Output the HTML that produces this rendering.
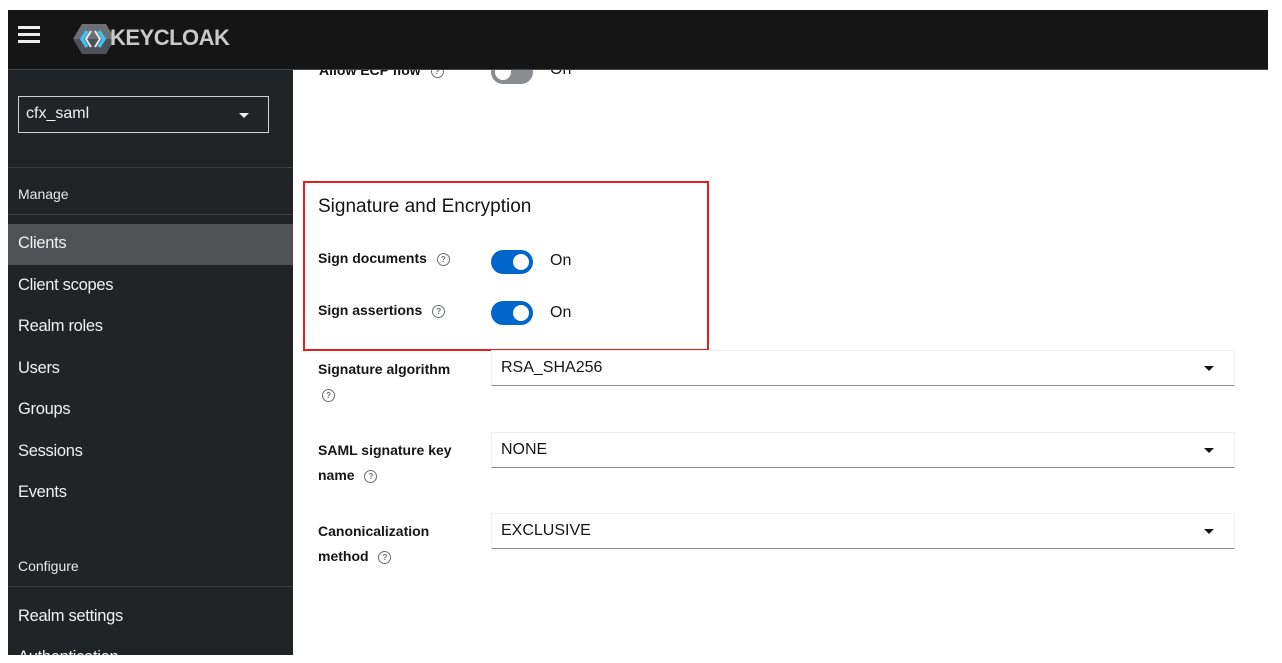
<!DOCTYPE html>
<html><head><style>
*{box-sizing:border-box;margin:0;padding:0}
body{width:1282px;height:663px;background:#fff;position:relative;overflow:hidden;font-family:"Liberation Sans",sans-serif;}
.abs{position:absolute}
.top{left:8px;top:10px;width:1260px;height:60px;background:#151515;border-bottom:1px solid #444;z-index:5}
.side{left:8px;top:70px;width:285px;height:585px;background:#212427;overflow:hidden}
.sep{position:absolute;left:0;width:285px;height:1px;background:#3c3f42}
.nav{position:absolute;left:10px;color:#f0f0f0;font-size:16.5px;letter-spacing:-0.3px}
.sec{position:absolute;left:10px;color:#e8e8e8;font-size:14px}
.lbl{position:absolute;font-size:14px;font-weight:bold;color:#151515;line-height:25px}
.q{display:inline-block;width:13px;height:13px;border:1.3px solid #6a6e73;border-radius:50%;font-size:8px;line-height:11px;text-align:center;color:#6a6e73;font-weight:bold;vertical-align:middle;margin-left:6px}
.tog{position:absolute;width:42px;height:24px;border-radius:12px;background:#0066cc}
.tog:after{content:"";position:absolute;right:4px;top:4px;width:16px;height:16px;border-radius:50%;background:#fff}
.on{position:absolute;font-size:16px;color:#151515}
.sel{position:absolute;left:491px;width:744px;height:36px;border:1px solid #f0f0f0;border-bottom:1px solid #8a8d90;font-size:16px;color:#151515;padding:8px 0 0 9px}
.sel:after{content:"";position:absolute;right:20px;top:15px;border-left:5px solid transparent;border-right:5px solid transparent;border-top:5px solid #151515}
</style></head><body>
<div class="abs top">
  <div class="abs" style="left:10px;top:16px;width:22px;height:3px;background:#eee;box-shadow:0 7px 0 #eee,0 14px 0 #eee"></div>
  <svg class="abs" style="left:64px;top:12px" width="44" height="34" viewBox="0 0 44 34">
    <polygon points="10,2 34,2 43,17 34,32 10,32 1,17" fill="#4d5258"/>
    <polygon points="1,17 10,2 34,2 43,17" fill="#6b7077"/>
    <path d="M15 9 L10 17 L15 25" stroke="#39c4f4" stroke-width="3.5" fill="none"/>
    <path d="M27 9 L32 17 L27 25" stroke="#39c4f4" stroke-width="3.5" fill="none"/>
    <path d="M19 9 L14 17 L19 25" stroke="#e8e8e8" stroke-width="2" fill="none"/>
    <path d="M23 9 L28 17 L23 25" stroke="#e8e8e8" stroke-width="2" fill="none"/>
  </svg>
  <div class="abs" style="left:102px;top:15px;font-size:22px;font-weight:bold;color:#c9c9c9;letter-spacing:-0.5px">KEYCLOAK</div>
</div>
<div class="abs side">
  <div class="abs" style="left:10px;top:26px;width:251px;height:37px;border:1px solid #d2d2d2;color:#f0f0f0;font-size:16px;padding:8px 0 0 7px">cfx_saml
    <div class="abs" style="right:19px;top:16px;border-left:5px solid transparent;border-right:5px solid transparent;border-top:5px solid #eee"></div></div>
  <div class="sep" style="top:97px"></div>
  <div class="sec" style="top:116px">Manage</div>
  <div class="sep" style="top:144px"></div>
  <div class="abs" style="left:0;top:154px;width:285px;height:41px;background:#4f5255"></div>
  <div class="nav" style="top:164px">Clients</div>
  <div class="nav" style="top:206px">Client scopes</div>
  <div class="nav" style="top:247px">Realm roles</div>
  <div class="nav" style="top:289px">Users</div>
  <div class="nav" style="top:330px">Groups</div>
  <div class="nav" style="top:372px">Sessions</div>
  <div class="nav" style="top:413px">Events</div>
  <div class="sec" style="top:488px">Configure</div>
  <div class="sep" style="top:516px"></div>
  <div class="nav" style="top:537px">Realm settings</div>
  <div class="nav" style="top:578px">Authentication</div>
</div>
<div class="abs" style="left:293px;top:70px;width:975px;height:585px;overflow:hidden">
  <div class="lbl" style="left:26px;top:-12px">Allow ECP flow <span class="q">?</span></div>
  <div class="abs" style="left:198px;top:-10px;width:42px;height:24px;border-radius:12px;background:#8a8d90"><div class="abs" style="left:4px;top:4px;width:16px;height:16px;border-radius:50%;background:#fff"></div></div>
  <div class="on" style="left:257px;top:-9px">On</div>
</div>
<div class="abs" style="left:303px;top:181px;width:406px;height:170px;border:2px solid #e02020"></div>
<div class="abs" style="left:318px;top:196px;font-size:19px;color:#151515">Signature and Encryption</div>
<div class="lbl" style="left:318px;top:246px">Sign documents <span class="q">?</span></div>
<div class="tog" style="left:491px;top:250px"></div><div class="on" style="left:550px;top:252px">On</div>
<div class="lbl" style="left:318px;top:298px">Sign assertions <span class="q">?</span></div>
<div class="tog" style="left:491px;top:301px"></div><div class="on" style="left:550px;top:304px">On</div>
<div class="lbl" style="left:318px;top:357px">Signature algorithm<br><span class="q" style="margin-left:4px">?</span></div>
<div class="sel" style="top:350px">RSA_SHA256</div>
<div class="lbl" style="left:318px;top:438px">SAML signature key<br>name <span class="q">?</span></div>
<div class="sel" style="top:432px">NONE</div>
<div class="lbl" style="left:318px;top:519px">Canonicalization<br>method <span class="q">?</span></div>
<div class="sel" style="top:513px">EXCLUSIVE</div>
</body></html>
